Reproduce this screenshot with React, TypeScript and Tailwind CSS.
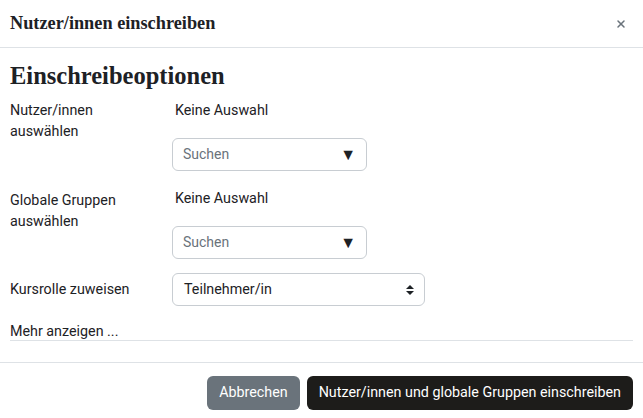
import { X } from 'lucide-react';

const serif = { fontFamily: '"Liberation Serif", "DejaVu Serif", serif' };

const SearchBox = () => (
  <div className="flex h-[33px] w-[195px] items-center justify-between rounded-md border border-[#c8cdd2] bg-white pl-[10px] pr-[10px]">
    <span className="text-[14px] text-[#6a737b]">Suchen</span>
    <span className="text-[16px] leading-none text-[#1d2125]">▼</span>
  </div>
);

const App = () => {
  return (
    <div className="flex h-[418px] w-[643px] flex-col bg-white text-[#1d2125]" style={{ fontFamily: 'Roboto, "Liberation Sans", sans-serif' }}>
      {/* Header */}
      <div className="flex h-[48px] items-center justify-between border-b border-[#dee2e6] pl-[10px] pr-4">
        <h5 className="text-[18.3px] font-bold" style={serif}>Nutzer/innen einschreiben</h5>
        <X className="h-3 w-3 text-[#6a737b]" strokeWidth={3} />
      </div>

      {/* Body */}
      <div className="flex flex-1 flex-col px-[10px] pt-[14px]">
        <h3 className="text-[24.5px] leading-7 font-bold" style={serif}>Einschreibeoptionen</h3>

        <div className="mt-[10px] flex">
          <div className="w-[162px] text-[14.3px] leading-[21px]">Nutzer/innen<br />auswählen</div>
          <div className="flex flex-col gap-[17px]">
            <div className="pl-[3px] text-[14.3px] leading-[21px]">Keine Auswahl</div>
            <SearchBox />
          </div>
        </div>

        <div className="mt-[19px] flex">
          <div className="w-[162px] text-[14.3px] leading-[21px]">Globale Gruppen<br />auswählen</div>
          <div className="flex flex-col gap-[17px]">
            <div className="pl-[3px] text-[14.3px] leading-[21px] -mt-[2px]">Keine Auswahl</div>
            <SearchBox />
          </div>
        </div>

        <div className="mt-[14px] flex items-center">
          <div className="w-[162px] text-[14.3px]">Kursrolle zuweisen</div>
          <div className="flex h-[33px] w-[253px] items-center justify-between rounded-md border border-[#c8cdd2] pl-[11px] pr-[10px]">
            <span className="text-[14.3px]">Teilnehmer/in</span>
            <svg width="8" height="10" viewBox="0 0 8 10" className="text-[#1d2125]">
              <path d="M0 4 L4 0 L8 4 Z M0 6 L4 10 L8 6 Z" fill="currentColor" />
            </svg>
          </div>
        </div>

        <div className="mt-[17px] border-b border-[#dee2e6] pb-[1px] text-[14.3px] leading-4">Mehr anzeigen ...</div>
      </div>

      {/* Footer */}
      <div className="flex h-[56px] items-start justify-end gap-[7px] border-t border-[#dee2e6] pt-[13px] pr-[10px]">
        <button className="h-[34px] rounded-md bg-[#6a737b] px-[12px] text-[14.3px] text-white">Abbrechen</button>
        <button className="h-[34px] rounded-md bg-[#1d1c1a] px-[12px] text-[14.3px] text-white">Nutzer/innen und globale Gruppen einschreiben</button>
      </div>
    </div>
  );
};

export default App;
